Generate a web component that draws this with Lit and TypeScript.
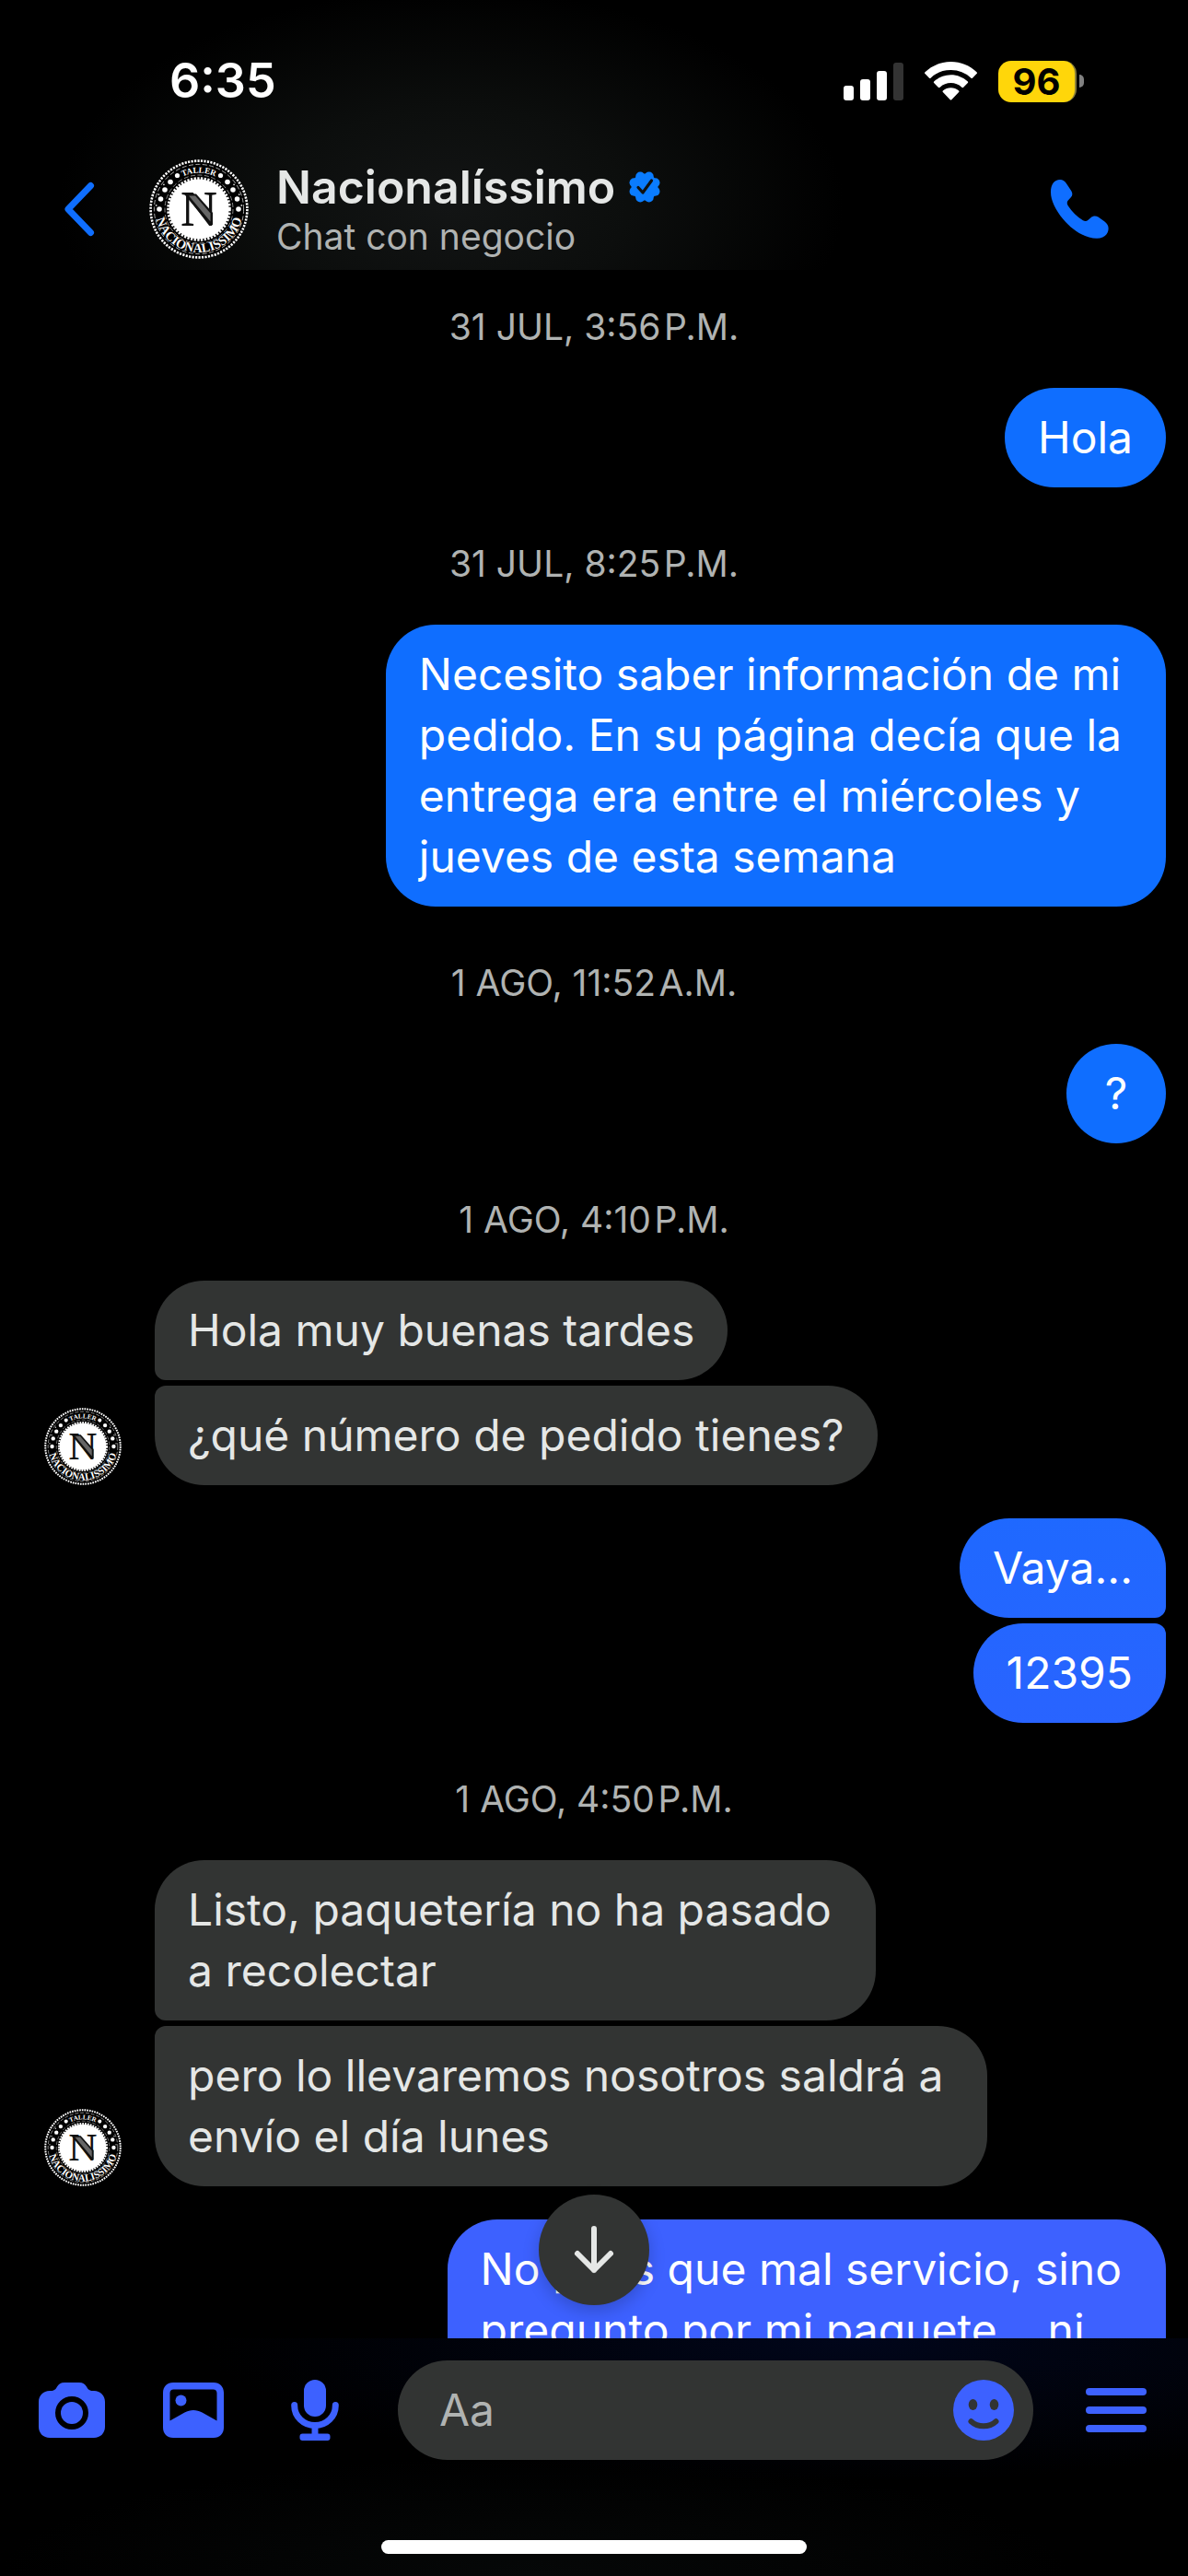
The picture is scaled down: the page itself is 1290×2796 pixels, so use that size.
import { LitElement, html, svg, css, nothing } from "lit";
import { customElement, property } from "lit/decorators.js";
import { classMap } from "lit/directives/class-map.js";

type Side = "in" | "out";

interface Entry {
  stamp?: string;
  side?: Side;
  bubbles?: string[];
  open?: boolean;
}

const THREAD: Entry[] = [
  { stamp: "31 JUL, 3:56\u200aP.M." },
  { side: "out", bubbles: ["Hola"] },
  { stamp: "31 JUL, 8:25\u200aP.M." },
  {
    side: "out",
    bubbles: [
      "Necesito saber información de mi\npedido. En su página decía que la\nentrega era entre el miércoles y\njueves de esta semana",
    ],
  },
  { stamp: "1 AGO, 11:52\u200aA.M." },
  { side: "out", bubbles: ["?"] },
  { stamp: "1 AGO, 4:10\u200aP.M." },
  { side: "in", bubbles: ["Hola muy buenas tardes", "¿qué número de pedido tienes?"] },
  { side: "out", bubbles: ["Vaya...", "12395"] },
  { stamp: "1 AGO, 4:50\u200aP.M." },
  {
    side: "in",
    bubbles: [
      "Listo, paquetería no ha pasado\na recolectar",
      "pero lo llevaremos nosotros saldrá a\nenvío el día lunes",
    ],
  },
  {
    side: "out",
    bubbles: ["No pues que mal servicio, sino\npregunto por mi paquete... ni"],
    open: true,
  },
];

@customElement("brand-avatar")
class BrandAvatar extends LitElement {
  static styles = css`
    :host {
      display: block;
      flex: none;
    }
    .seal {
      display: block;
      width: 100%;
      height: 100%;
    }
    .ring-text {
      font-family: "Liberation Serif", serif;
      font-weight: 700;
      fill: #fff;
    }
    .top-text {
      font-size: 9px;
    }
    .bottom-text {
      font-size: 14px;
    }
    .initial {
      font-family: "Liberation Serif", serif;
      font-weight: 700;
      font-size: 54px;
      fill: #111;
    }
  `;

  render() {
    const dots = [
      [23.5, 36.5, 2.6],
      [31, 29.5, 2.8],
      [37, 21, 2.8],
      [41.5, 11, 2.8],
      [43, 0, 2.8],
    ];
    return html`<svg class="seal" viewBox="0 0 108 108" role="img" aria-label="Nacionalíssimo">
      <circle cx="54" cy="54" r="53" fill="#000" />
      <circle cx="54" cy="54" r="52.4" fill="none" stroke="#fff" stroke-width="2.6" stroke-dasharray="2.2 1.3" />
      <circle cx="54" cy="54" r="48.6" fill="none" stroke="#bbb" stroke-width="0.9" stroke-dasharray="5 2.5" />
      <circle cx="54" cy="54" r="37" fill="none" stroke="#999" stroke-width="0.9" stroke-dasharray="5 2.5" />
      <circle cx="54" cy="54" r="32.6" fill="#fff" />
      <circle cx="54" cy="54" r="33.4" fill="none" stroke="#fff" stroke-width="2.8" stroke-dasharray="2.3 1.4" />
      ${dots.map(
        ([x, y, r]) => svg`<circle cx=${54 - x} cy=${54 - y} r=${r} fill="#fff" />
          <circle cx=${54 + x} cy=${54 - y} r=${r} fill="#fff" />`,
      )}
      ${[5, 20, 35].map((a) => {
        const t = (a * Math.PI) / 180;
        const x = 46.5 * Math.cos(t);
        const y = 46.5 * Math.sin(t);
        return svg`<circle cx=${54 - x} cy=${54 - y} r="0.9" fill="#ddd" />
          <circle cx=${54 + x} cy=${54 - y} r="0.9" fill="#ddd" />`;
      })}
      <path id="upper" d="M14.500 54A39.500 39.500 0 0 1 93.500 54" fill="none" />
      <path id="lower" d="M6 53A48 48 0 0 0 102 53" fill="none" />
      <text class="ring-text top-text" text-anchor="middle">
        <textPath href="#upper" startOffset="50%">TALLER</textPath>
      </text>
      <text class="ring-text bottom-text" text-anchor="middle">
        <textPath href="#lower" startOffset="50%">NACIONALISSIMO</textPath>
      </text>
      <text class="initial" x="54" y="72" text-anchor="middle">N</text>
      <path d="M38 37.500H51L69 58V71H65.500L41.500 42Z" fill="#111" />
      <path d="M43 39.500H50L66.500 58.500V67.500Z" fill="#666" />
    </svg>`;
  }
}

@customElement("chat-group")
class ChatGroup extends LitElement {
  @property() side: Side = "in";
  @property({ attribute: false }) bubbles: string[] = [];
  @property({ type: Boolean }) open = false;

  static styles = css`
    :host {
      display: block;
    }
    .group {
      display: flex;
      align-items: flex-end;
      padding: 0 24px 0 48px;
    }
    .avatar {
      width: 84px;
      height: 84px;
      margin-right: 36px;
    }
    .stack {
      flex: 1;
      display: flex;
      flex-direction: column;
      align-items: flex-start;
      gap: 6px;
    }
    .out .stack {
      align-items: flex-end;
    }
    .bubble {
      box-sizing: border-box;
      min-width: 108px;
      margin: 0;
      padding: 21px 36px;
      border-radius: 54px;
      background: #323433;
      color: #e5e7e6;
      font-size: 48px;
      line-height: 66px;
      text-align: left;
      white-space: pre-line;
    }
    .short {
      text-align: center;
    }
    .multi {
      padding-right: 48px;
    }
    .out .bubble {
      color: #fff;
      background: linear-gradient(#0f6eff 46%, #2068ff 60%, #2864ff 66%, #3d61ff 86%) fixed;
    }
    .in .joined-below {
      border-bottom-left-radius: 12px;
    }
    .in .joined-above {
      border-top-left-radius: 12px;
    }
    .out .joined-below {
      border-bottom-right-radius: 12px;
    }
    .out .joined-above {
      border-top-right-radius: 12px;
    }
    .out .open {
      border-bottom-left-radius: 12px;
      border-bottom-right-radius: 12px;
    }
  `;

  render() {
    const last = this.bubbles.length - 1;
    return html`<div class="group ${this.side}">
      ${this.side === "in" ? html`<brand-avatar class="avatar"></brand-avatar>` : nothing}
      <div class="stack">
        ${this.bubbles.map(
          (text, i) =>
            html`<p
              class=${classMap({
                bubble: true,
                short: text.length < 2,
                multi: text.includes("\n"),
                "joined-above": i > 0,
                "joined-below": i < last,
                open: this.open,
              })}
            >${text}</p>`,
        )}
      </div>
    </div>`;
  }
}

@customElement("app-root")
class AppRoot extends LitElement {
  static styles = css`
    :host {
      display: flex;
      flex-direction: column;
      height: 100vh;
      overflow: hidden;
      background: #000;
      color: #e5e7e6;
      font-family: Inter, "Liberation Sans", sans-serif;
    }
    svg {
      display: block;
    }
    button {
      display: grid;
      place-items: center;
      flex: none;
      margin: 0;
      padding: 0;
      border: 0;
      background: none;
      color: inherit;
      cursor: pointer;
    }
    .header {
      flex: none;
      background: radial-gradient(ellipse 33% 80% at 38% 76%, #131515, #0c0e0d 45%, #000) #000;
    }
    .status {
      display: flex;
      align-items: center;
      justify-content: space-between;
      height: 96px;
      padding: 40px 113px 24px 184px;
      color: #fff;
    }
    .time {
      font-size: 52px;
      line-height: 60px;
      font-weight: 600;
    }
    .indicators {
      display: flex;
      align-items: center;
      gap: 23px;
    }
    .battery {
      display: flex;
      align-items: center;
      gap: 3px;
    }
    .level {
      box-sizing: border-box;
      width: 85px;
      height: 45px;
      border-right: 2px solid #8a7f3a;
      border-radius: 14px;
      background: #ffd60a;
      color: #000;
      font-size: 40px;
      line-height: 45px;
      font-weight: 700;
      text-align: center;
    }
    .tip {
      width: 5px;
      height: 14px;
      border-radius: 0 5px 5px 0;
      background: #808080;
    }
    .bar {
      display: flex;
      align-items: center;
      height: 133px;
      padding: 0 57px 0 30px;
    }
    .back {
      width: 112px;
      height: 108px;
      margin-right: 20px;
      color: #0f6eff;
    }
    .avatar {
      width: 108px;
      height: 108px;
      margin-right: 30px;
    }
    .who {
      flex: 1;
    }
    .name-row {
      display: flex;
      align-items: center;
      gap: 14px;
    }
    .name {
      margin: 0;
      font-size: 50px;
      line-height: 60px;
      font-weight: 600;
    }
    .subtitle {
      margin: 0;
      font-size: 39px;
      line-height: 48px;
      color: #b0b3b2;
    }
    .call {
      width: 120px;
      height: 108px;
      color: #0f6eff;
    }
    .body {
      position: relative;
      flex: 1;
      min-height: 0;
    }
    .thread {
      height: 100%;
      overflow: hidden;
    }
    .stamp {
      margin: 0;
      padding: 59px 0 42px;
      font-size: 39px;
      line-height: 48px;
      text-align: center;
      color: #b0b3b2;
    }
    .stamp:first-child {
      padding-top: 38px;
    }
    chat-group + chat-group {
      margin-top: 36px;
    }
    .jump {
      position: absolute;
      bottom: 36px;
      left: calc(50% - 60px);
      width: 120px;
      height: 120px;
      border-radius: 50%;
      background: #323433;
      box-shadow: 0 6px 18px rgba(0, 0, 0, 0.2);
    }
    .composer {
      flex: none;
      padding: 24px 12px;
      background:
        radial-gradient(ellipse 55% 60% at 72% 0, #01061b, rgba(1, 5, 22, 0.6) 50%, transparent),
        radial-gradient(ellipse 45% 50% at 45% 100%, #060808, transparent),
        #000;
      color: #3d61ff;
    }
    .tools {
      display: flex;
      align-items: center;
    }
    .tool {
      width: 132px;
      height: 108px;
    }
    .field {
      flex: 1;
      min-width: 0;
      display: flex;
      align-items: center;
      margin: 0 24px;
      height: 108px;
      padding: 0 21px 0 45px;
      box-sizing: border-box;
      border-radius: 54px;
      background: #323433;
    }
    .entry {
      flex: 1;
      min-width: 0;
      padding: 0;
      border: 0;
      outline: 0;
      background: none;
      color: #e5e7e6;
      font: 48px/66px Inter, "Liberation Sans", sans-serif;
    }
    .entry::placeholder {
      color: #b0b3b2;
      opacity: 1;
    }
    .home {
      width: 462px;
      height: 15px;
      margin: 87px auto 0;
      border-radius: 8px;
      background: #fff;
    }
  `;

  private statusBar() {
    return html`<div class="status">
      <div class="time">6:35</div>
      <div class="indicators">
        <svg width="65" height="42" viewBox="0 0 65 42" fill="#fff" aria-hidden="true">
          <rect x="0" y="26" width="11" height="16" rx="3" />
          <rect x="18" y="19" width="11" height="23" rx="3" />
          <rect x="36" y="10" width="11" height="32" rx="3" />
          <rect x="54" y="1" width="11" height="41" rx="3" fill="#333" />
        </svg>
        <svg width="57" height="42" viewBox="0 0 57 42" fill="#fff" aria-hidden="true">
          <path d="M28.5 0C39.3 0 49.2 4.2 56.5 11.2a1.3 1.3 0 0 1 0 1.9l-4.3 4.4a1.4 1.4 0 0 1-2 0A31.3 31.3 0 0 0 28.5 9 31.300 31.300 0 0 0 6.800 17.500a1.400 1.400 0 0 1-2 0L.5 13.100a1.300 1.300 0 0 1 0-1.900C7.800 4.200 17.700 0 28.500 0Z" />
          <path d="M28.500 14.300c7 0 13.300 2.700 18.100 7a1.300 1.300 0 0 1 0 2l-4.400 4.400a1.400 1.400 0 0 1-1.900 0 17.500 17.500 0 0 0-23.600 0 1.400 1.400 0 0 1-1.900 0l-4.400-4.400a1.300 1.300 0 0 1 0-2c4.800-4.300 11.100-7 18.100-7Z" />
          <path d="M28.500 28.300c3.200 0 6.100 1.100 8.400 3a1.300 1.300 0 0 1 0 2l-7.400 7.700a1.400 1.400 0 0 1-2 0l-7.400-7.700a1.300 1.300 0 0 1 0-2c2.300-1.900 5.200-3 8.400-3Z" />
        </svg>
        <div class="battery">
          <div class="level">96</div>
          <div class="tip"></div>
        </div>
      </div>
    </div>`;
  }

  private verified() {
    const lobes = Array.from({ length: 8 }, (_, i) => {
      const t = ((22.5 + 45 * i) * Math.PI) / 180;
      return svg`<circle cx=${18 + 12.4 * Math.cos(t)} cy=${18 + 12.4 * Math.sin(t)} r="5" />`;
    });
    return html`<svg width="36" height="36" viewBox="0 0 36 36" fill="#0a7cff" role="img" aria-label="Verificado">
      <circle cx="18" cy="18" r="14.500" />
      ${lobes}
      <path d="M11 18.500L16 24 25.500 11" fill="none" stroke="#0f1111" stroke-width="3.200" stroke-linecap="round" stroke-linejoin="round" />
    </svg>`;
  }

  render() {
    return html`
      <header class="header">
        ${this.statusBar()}
        <div class="bar">
          <button class="back" aria-label="Atrás">
            <svg width="34" height="60" viewBox="0 0 34 60" fill="none" stroke="currentColor" stroke-width="7" stroke-linecap="round" stroke-linejoin="round">
              <path d="M29.500 4.500L5 30 29.500 55.500" />
            </svg>
          </button>
          <brand-avatar class="avatar"></brand-avatar>
          <div class="who">
            <div class="name-row">
              <h1 class="name">Nacionalíssimo</h1>
              ${this.verified()}
            </div>
            <p class="subtitle">Chat con negocio</p>
          </div>
          <button class="call" aria-label="Llamar">
            <svg width="64" height="64" viewBox="0 0 64 64" fill="currentColor">
              <path d="M10 0C13 0 15.500 1.800 17.500 5L22.300 12.300C23.800 14.800 23.700 17 22 19L18.800 22.600C17.300 24.300 17.500 26.300 18.700 28.300 23 35 28.500 40.500 35 44.300 37 45.400 39 45.300 40.600 43.800L43.800 41C46 39.200 49 39 51.500 40.600L58.500 45.500C61.500 47.700 62.800 50.500 62.600 53.500 62.200 60 57 63.800 50 63.800 38 63.800 24 55.500 13.500 43 5 32.800 0 22.500 0 13.500 0 5 4 0 10 0Z" />
            </svg>
          </button>
        </div>
      </header>

      <main class="body">
        <div class="thread">
          ${THREAD.map((e) =>
            e.stamp
              ? html`<p class="stamp">${e.stamp}</p>`
              : html`<chat-group .side=${e.side!} .bubbles=${e.bubbles!} .open=${!!e.open}></chat-group>`,
          )}
        </div>
        <button class="jump" aria-label="Ir al final">
          <svg width="46" height="54" viewBox="0 0 46 54" fill="none" stroke="#e5e7e6" stroke-width="6" stroke-linecap="round" stroke-linejoin="round">
            <path d="M23 4V49M5 31L23 49 41 31" />
          </svg>
        </button>
      </main>

      <footer class="composer">
        <div class="tools">
          <button class="tool" aria-label="Cámara">
            <svg width="72" height="60" viewBox="0 0 72 60" fill="currentColor">
              <path fill-rule="evenodd" d="M28 0H44C48 0 50.500 1.800 52 4.500 53.500 7.300 55 9 59 9H60C67 9 72 14 72 21V48C72 55 67 60 60 60H12C5 60 0 55 0 48V21C0 14 5 9 12 9H13C17 9 18.500 7.300 20 4.500 21.500 1.800 24 0 28 0ZM36 15A18 18 0 1 0 36 51 18 18 0 1 0 36 15Z" />
              <circle cx="36" cy="33" r="12" />
            </svg>
          </button>
          <button class="tool" aria-label="Galería">
            <svg width="66" height="60" viewBox="0 0 66 60" fill="currentColor">
              <path fill-rule="evenodd" d="M11 0H55C61.500 0 66 4.500 66 11V49C66 55.500 61.500 60 55 60H11C4.500 60 0 55.500 0 49V11C0 4.500 4.500 0 11 0ZM11.500 7.500C9 7.500 7.500 9 7.500 11.500V41.500L23.500 32.500C29.500 29 36.500 29 42.500 32.500L58.500 41.500V11.500C58.500 9 57 7.500 54.500 7.500Z" />
              <circle cx="19.500" cy="19.500" r="6" />
            </svg>
          </button>
          <button class="tool" aria-label="Mensaje de voz">
            <svg width="52" height="66" viewBox="0 0 52 66" fill="currentColor">
              <rect x="14" y="0" width="24" height="40" rx="12" />
              <path d="M3.700 27.500V28C3.700 40 13.500 49.500 26 49.500S48.300 40 48.300 28V27.500" fill="none" stroke="currentColor" stroke-width="7" stroke-linecap="round" />
              <path d="M22.500 48H29.500V60H22.500Z" />
              <rect x="9.500" y="58.500" width="33" height="7.500" rx="3" />
            </svg>
          </button>
          <div class="field">
            <input class="entry" type="text" placeholder="Aa" aria-label="Mensaje" />
            <button aria-label="Emojis">
              <svg width="66" height="66" viewBox="0 0 66 66">
                <circle cx="33" cy="33" r="33" fill="#3d61ff" />
                <ellipse cx="21.500" cy="27" rx="4.800" ry="6" fill="#323433" />
                <ellipse cx="44.500" cy="27" rx="4.800" ry="6" fill="#323433" />
                <path d="M19.500 45.200C27 52 39 52 46.500 45.200" fill="none" stroke="#323433" stroke-width="6" stroke-linecap="round" />
              </svg>
            </button>
          </div>
          <button class="tool" aria-label="Menú">
            <svg width="66" height="48" viewBox="0 0 66 48" fill="currentColor">
              <rect width="66" height="8" rx="4" />
              <rect y="20" width="66" height="8" rx="4" />
              <rect y="40" width="66" height="8" rx="4" />
            </svg>
          </button>
        </div>
        <div class="home"></div>
      </footer>
    `;
  }
}
